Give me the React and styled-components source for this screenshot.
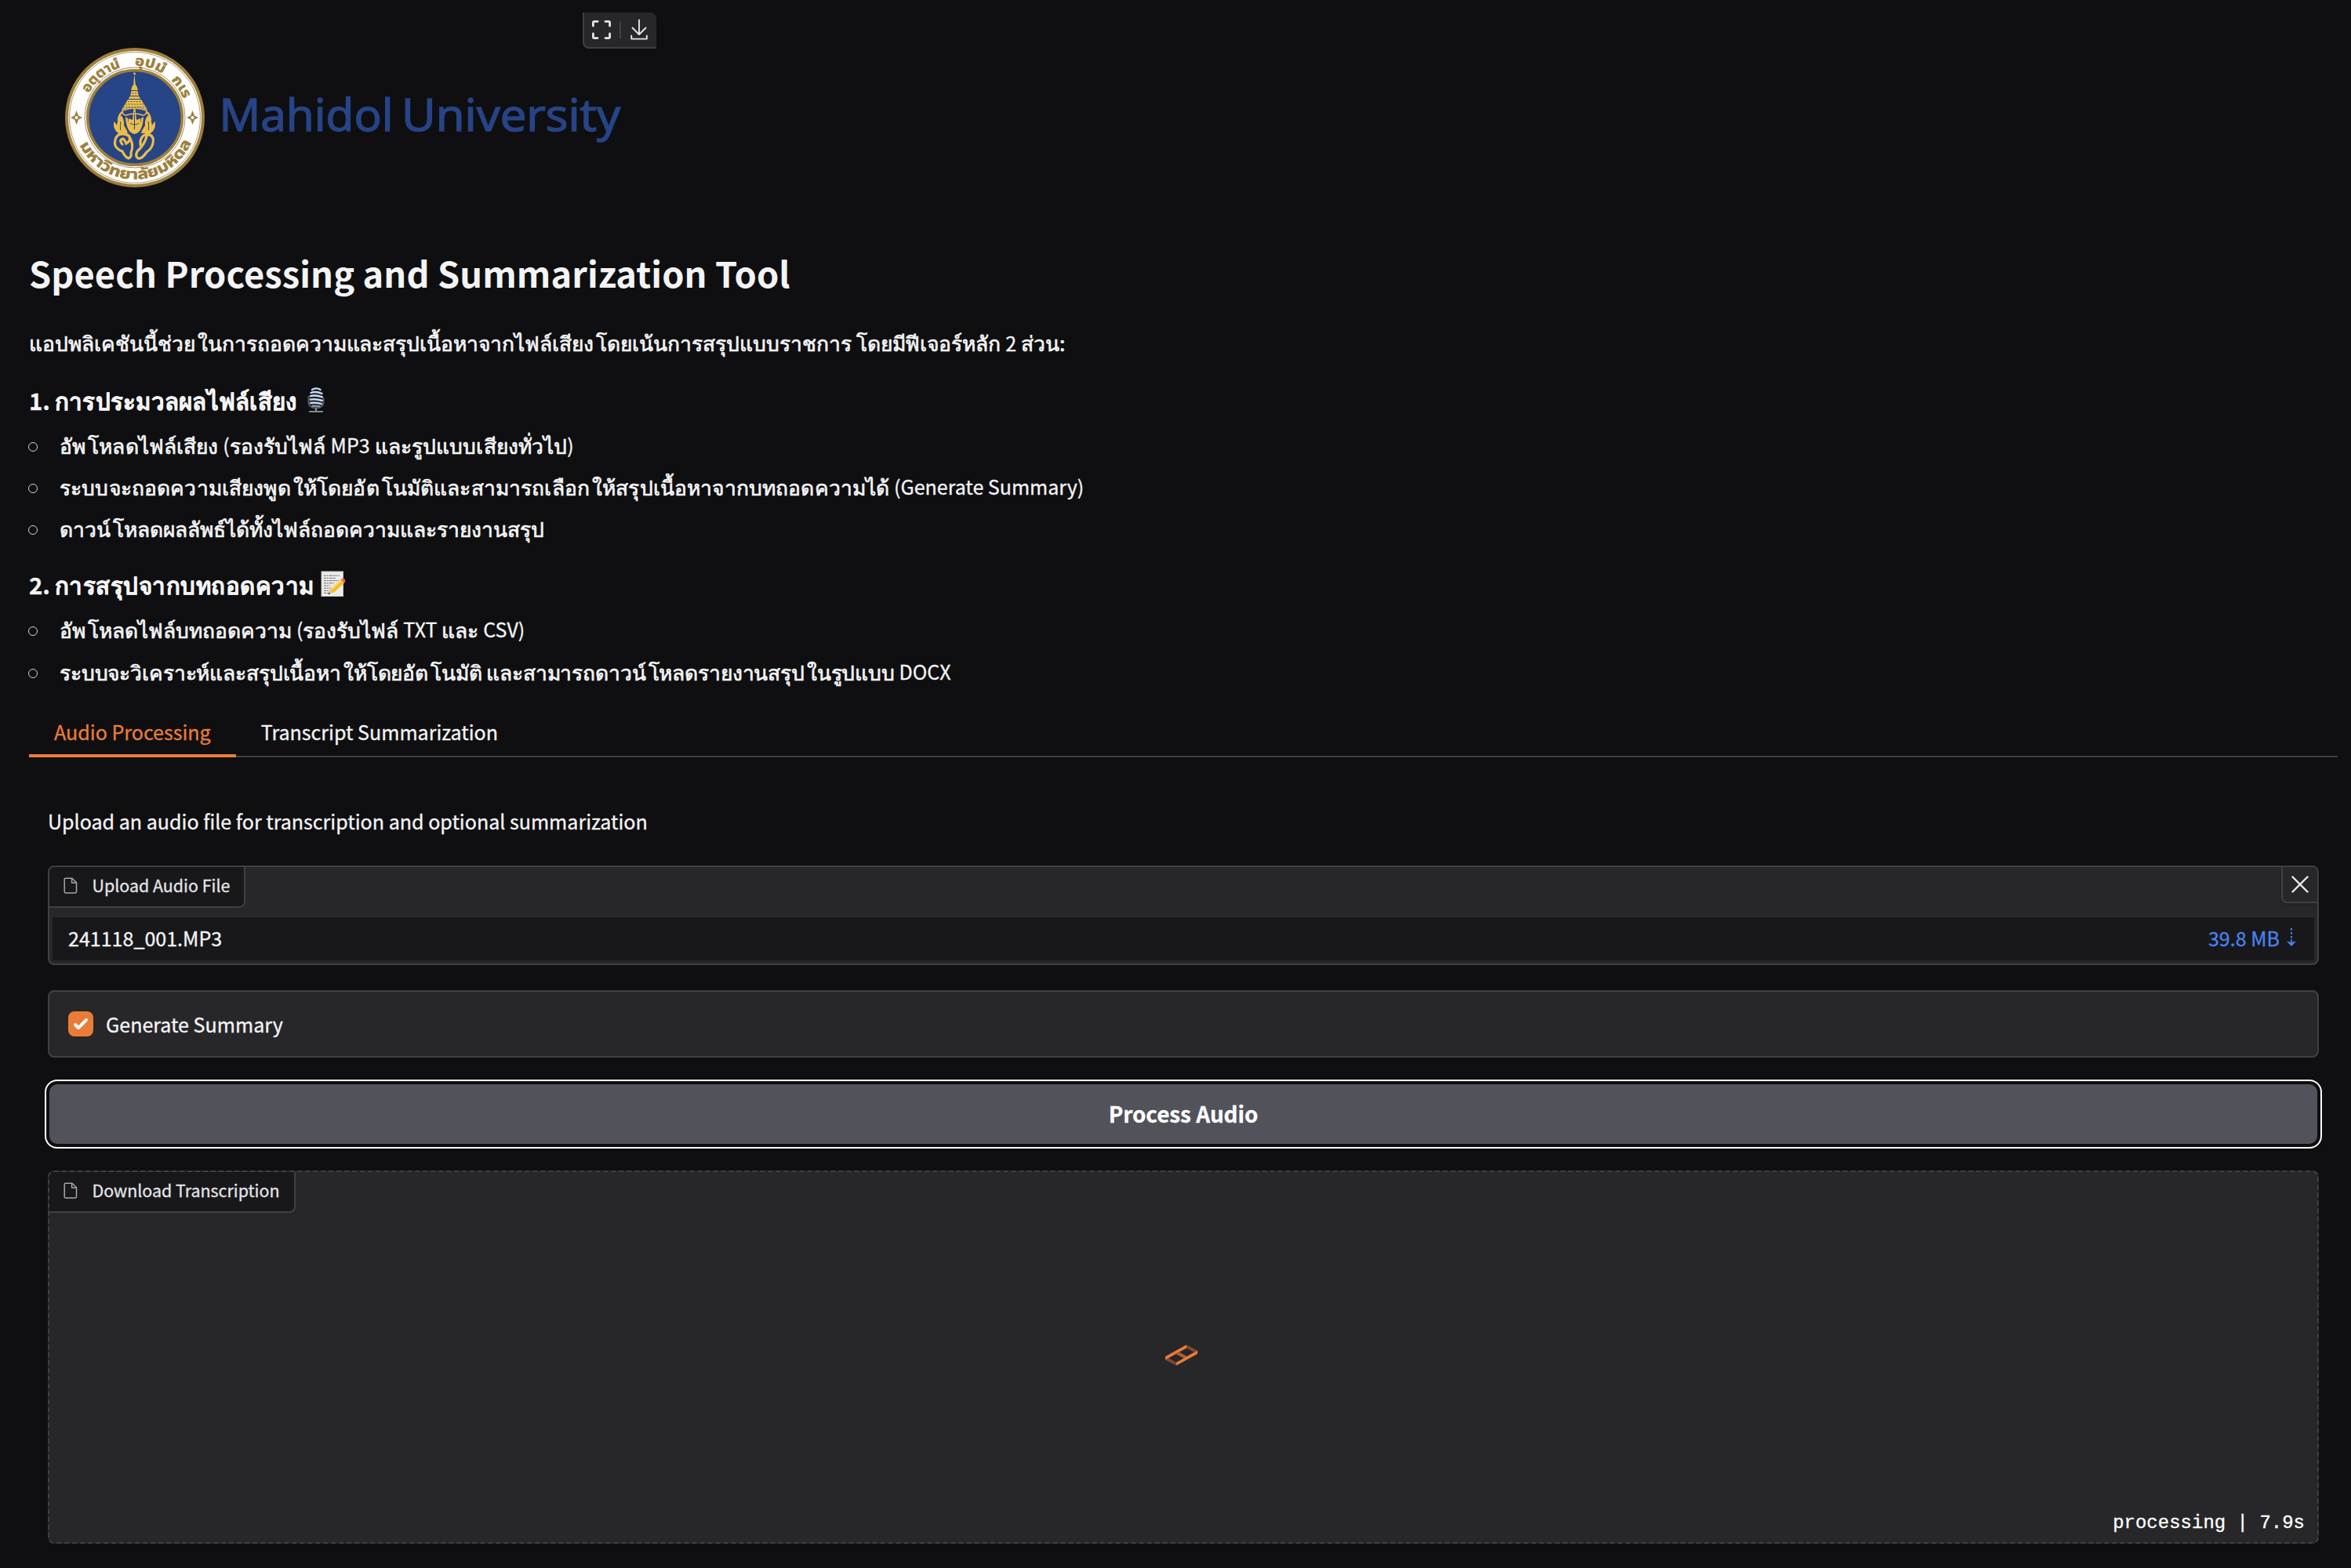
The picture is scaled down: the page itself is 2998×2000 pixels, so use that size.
import React from 'react';
import styled, { createGlobalStyle } from 'styled-components';

const sans = '"Noto Sans CJK JP", sans-serif';
const line = '#3f3f46';
const panel = '#27272a';
const sunken = '#18181b';
const orange = '#e97d37';

const GlobalStyle = createGlobalStyle`
  * { box-sizing: border-box; }
  body {
    margin: 0;
    background: #0f0f11;
    color: #f4f4f5;
    font-family: ${sans};
    -webkit-text-stroke: 0.3px currentColor;
  }
  h1, h3, p, ul { margin: 0; padding: 0; font-weight: 400; }
`;

const Page = styled.main`
  height: 2000px;
  padding: 0 17px 0 37px;
  overflow: hidden;
  display: flex;
  flex-direction: column;
`;

const Banner = styled.header`
  position: relative;
  width: 801px;
  height: 300px;
  padding: 61px 0 0 46px;
  flex: none;
`;

const LogoArt = styled.svg`
  display: block;
  -webkit-text-stroke: 0;
`;

const ImageTools = styled.div`
  position: absolute;
  top: 16px;
  right: 1px;
  width: 94px;
  height: 46px;
  display: flex;
  align-items: center;
  background: ${panel};
  border: solid ${line};
  border-width: 0 0 2px 2px;
  border-radius: 0 8px 0 8px;
  svg { display: block; }
`;

const Text = styled.span`
  letter-spacing: ${(p) => p.$ls || 0}px;
  white-space: pre;
`;

const Latin = styled.span`
  font-size: 25px;
  line-height: 1;
  -webkit-text-stroke: 0.3px currentColor;
  letter-spacing: 0;
  white-space: pre;
`;

const ThaiText = styled.span`
  letter-spacing: ${(p) => p.$ls || 0}px;
  white-space: pre;
  -webkit-text-stroke: 0.7px currentColor;
`;

const VowelGap = styled.span`
  margin-left: 3px;
`;

const Title = styled.h1`
  margin-top: 18px;
  font-size: 45.2px;
  line-height: 60px;
  font-weight: 700;
  white-space: nowrap;
  -webkit-text-stroke: 0;
`;

const Intro = styled.p`
  margin-top: 38.5px;
  font-size: 26.4px;
  line-height: 40px;
  white-space: nowrap;
`;

const Heading = styled.h3`
  display: flex;
  align-items: center;
  margin-top: ${(p) => p.$top}px;
  height: 44px;
  font-size: 29.4px;
  line-height: 44px;
  font-weight: 700;
  white-space: nowrap;
  svg { display: block; margin-left: ${(p) => p.$gap}px; }
`;

const List = styled.ul`
  margin-top: 9px;
  list-style: none;
`;

const Item = styled.li`
  display: flex;
  align-items: center;
  height: 53.4px;
  font-size: 26.4px;
  line-height: 53.4px;
  white-space: nowrap;
  &::before {
    content: '';
    width: 10px;
    height: 10px;
    margin: 5px 28px 0 0;
    border: 1.5px solid #d4d4d8;
    border-radius: 50%;
    margin-left: -1px;
  }
`;

const Tabs = styled.nav`
  display: flex;
  height: 66px;
  margin-top: 17px;
  flex: none;
  box-shadow: inset 0 -2px 0 ${line};
`;

const Tab = styled.div`
  padding: 0 32px;
  font-size: 25.06px;
  line-height: 66px;
  white-space: nowrap;
  color: ${(p) => (p.$active ? orange : '#f4f4f5')};
  box-shadow: ${(p) => (p.$active ? `inset 0 -4px 0 ${orange}` : 'none')};
`;

const Body = styled.section`
  display: flex;
  flex-direction: column;
  padding: 61px 24px 0;
`;

const Hint = styled.p`
  font-size: 25.06px;
  line-height: 40px;
  margin-bottom: 37px;
`;

const Block = styled.div`
  position: relative;
  height: ${(p) => p.$h}px;
  margin-bottom: ${(p) => p.$gap || 0}px;
  background: ${panel};
  border: 2px ${(p) => (p.$dashed ? 'dashed' : 'solid')} ${line};
  border-radius: 8px;
`;

const BlockLabel = styled.div`
  display: inline-flex;
  align-items: center;
  height: 52px;
  padding: 0 18px 3px 18px;
  background: ${sunken};
  border: solid ${line};
  border-width: 0 2px 2px 0;
  border-radius: 6px 0 8px 0;
  font-size: 21.4px;
  line-height: 46px;
  color: #e4e4e7;
  vertical-align: top;
  white-space: nowrap;
  svg { display: block; margin: 1px 18.5px 0 0; }
`;

const BlockTop = styled.div`
  display: flex;
  justify-content: space-between;
  height: 64px;
`;

const ClearButton = styled.div`
  display: flex;
  align-items: center;
  justify-content: center;
  width: 46px;
  height: 46px;
  border: solid ${line};
  border-width: 0 0 2px 2px;
  border-radius: 0 6px 0 8px;
  box-shadow: 0 2px 4px rgba(0, 0, 0, 0.15);
`;

const FileRow = styled.div`
  display: flex;
  align-items: center;
  justify-content: space-between;
  height: 55px;
  margin: 0 4px;
  padding: 0 23px 2px 20px;
  background: ${sunken};
  font-size: 25.06px;
  line-height: 52px;
`;

const FileSize = styled.span`
  display: flex;
  align-items: center;
  gap: 9px;
  color: #4b82ee;
`;

const CheckRow = styled.label`
  display: flex;
  align-items: center;
  height: 82px;
  padding: 0 0 0 24px;
  gap: 16px;
  font-size: 25.06px;
  line-height: 48px;
`;

const CheckBox = styled.span`
  width: 32px;
  height: 32px;
  border-radius: 8px;
  background: ${orange};
  svg { display: block; }
`;

const Process = styled.button`
  margin: 2px 2px 34px;
  height: 76px;
  padding: 0 0 2px;
  border: 0;
  border-radius: 10px;
  background: #52525b;
  box-shadow: 0 0 0 4px #0f0f11, 0 0 0 6px #fff;
  color: #fff;
  font: 700 27.8px/72px ${sans};
`;

const Loading = styled.div`
  display: flex;
  align-items: center;
  justify-content: center;
  height: 380px;
  padding: 0 5px 13px 0;
  margin-top: -2px;
`;

const Progress = styled.div`
  text-align: right;
  padding-right: 16px;
  font: 24px/36px "Liberation Mono", monospace;
  color: #fff;
`;

const Thai = ({ children, $ls }) => (
  <ThaiText $ls={$ls}>
    {children.split(/(?<=[^\s้(])(?=[โใ])/).map((part, i) => (i ? <VowelGap key={i}>{part}</VowelGap> : part))}
  </ThaiText>
);

const FileIcon = () => (
  <svg width="18" height="22" viewBox="0 0 18 22" fill="none" stroke="#a6a6ab" strokeWidth="1.5" strokeLinejoin="round">
    <path d="M11 1.2H2.6Q1.2 1.2 1.2 2.6V18.6Q1.2 20 2.6 20H15.1Q16.5 20 16.5 18.6V6.8Z" />
    <path d="M10.6 1.2V7H16.5" />
  </svg>
);

const Microphone = () => (
  <svg width="22" height="34" viewBox="0 0 22 34">
    <path d="M1.5 12V20Q2 27.5 11 27.5Q20 27.5 20.5 20V14" fill="none" stroke="#55585c" strokeWidth="2.2" />
    <rect x="3.2" y="1" width="16" height="25.5" rx="7.5" fill="#151a22" transform="rotate(4 11 13)" />
    <g stroke="#c9dcf3" strokeWidth="2.4" strokeLinecap="round" fill="none">
      <path d="M6 4Q11 .8 16.5 4M4.5 8Q11 5.5 18.5 9M4 12.2Q11 10.5 18.8 13.4M3.8 16.6Q11 15.5 18.8 18M4.2 21Q11 20.2 17.8 22.2" />
      <path d="M6.5 24.8Q11 25 15.5 25.4" stroke="#8d99a8" />
    </g>
    <path d="M11 27V31M2 32H20" stroke="#85888c" strokeWidth="2.2" />
  </svg>
);

const Memo = () => (
  <svg width="32" height="34" viewBox="0 0 32 34">
    <rect x="1" y="1" width="27.5" height="31.5" fill="#ececea" stroke="#c4c4c0" />
    <path
      d="M4 6.2h20M4 9.4h15M4 12.6h19M4 15.8h13M4 19h8M4 22.2h9M4 25.4h6M4 28.4h5"
      stroke="#66666b"
      strokeWidth="1"
      strokeDasharray="3 .8 2 1 4 .9"
    />
    <path d="M12 23 25.5 11.2 30 15.8 16.5 28Z" fill="#f5bd2c" />
    <path d="M12 23 25.5 11.2 27 12.8 13.5 24.8Z" fill="#fbdd72" />
    <path d="M25.5 11.2 27.5 9.6Q30.5 9.5 31.5 13L30 15.8Z" fill="#e8646c" />
    <path d="M12 23 16.5 28 9.5 30Z" fill="#e3c193" />
    <path d="M10.6 27.2 12 29.3 9.2 30.2Z" fill="#222" />
  </svg>
);

const Spinner = () => (
  <svg width="41" height="27" viewBox="318 1005 123 80">
    <path d="M399 1005 441 1027 428 1034 399 1018Z" fill="#7a4b2f" />
    <path d="M318 1063 331 1056 360 1073V1085Z" fill="#7a4b2f" />
    <path d="M360 1041 373 1034 402 1050 389 1057Z" fill="#a95f33" />
    <path d="M318 1050 399 1005V1018L318 1063Z" fill={orange} />
    <path d="M360 1073 441 1027V1040L360 1085Z" fill={orange} />
  </svg>
);

const Logo = () => (
  <LogoArt width="720" height="180" viewBox="0 0 720 180">
    <circle cx="89" cy="89" r="89" fill="#9c7f3c" />
    <circle cx="89" cy="89" r="85" fill="#fff" />
    <circle cx="89" cy="89" r="83.4" fill="none" stroke="#9c7f3c" strokeWidth=".8" />
    <circle cx="89" cy="89" r="64" fill="none" stroke="#9c7f3c" strokeWidth=".9" />
    <circle cx="89" cy="89" r="60.3" fill="#264486" stroke="#9c7f3c" strokeWidth="3.6" />
    <defs>
      <path id="arcTop" d="M22.6 89A66.4 66.4 0 0 1 155.4 89" />
      <path id="arcLow" d="M10.4 89A78.6 78.6 0 0 0 167.6 89" />
    </defs>
    <g fill="#9c7f3c" stroke="#9c7f3c" strokeWidth=".5" fontFamily='"Noto Sans Thai", "Noto Sans", sans-serif' fontWeight="700" fontSize="17.5">
      <text><textPath href="#arcTop" startOffset="32" textLength="54" lengthAdjust="spacingAndGlyphs">อตฺตานํ</textPath></text>
      <text><textPath href="#arcTop" startOffset="104" textLength="38" lengthAdjust="spacingAndGlyphs">อุปมํ</textPath></text>
      <text><textPath href="#arcTop" startOffset="155" textLength="29" lengthAdjust="spacingAndGlyphs">กเร</textPath></text>
      <text fontSize="18.5"><textPath href="#arcLow" startOffset="36" textLength="178" lengthAdjust="spacingAndGlyphs">มหาวิทยาลัยมหิดล</textPath></text>
    </g>
    <g fill="#9c7f3c">
      <path d="M14.500 80 17 86.500 22 89 17 91.500 14.500 98 12 91.500 7 89 12 86.500Z" />
      <path d="M162.500 80 165 86.500 170 89 165 91.500 162.500 98 160 91.500 155 89 160 86.500Z" />
      <circle cx="14.500" cy="89" r="2" fill="#fff" />
      <circle cx="162.500" cy="89" r="2" fill="#fff" />
    </g>
    <g fill="#ebbd4c">
      <path d="M88.300 33 90 49H87ZM86 48H91L93 54H84ZM84.500 55H92.500L94 61H83ZM82.500 62H94.500L96 65H81Z" />
      <circle cx="88.500" cy="33" r="1.400" />
      <path d="M80 66H97L105 79Q88.500 73 72 79Z" />
      <path d="M66 99Q67 91 71.500 86Q76 92 75 99Q79 105 80 109H68Q60 103 62.500 94Q65 96 66 99Z" />
      <path d="M111 99Q110 91 105.500 86Q101 92 102 99Q98 105 97 109H109Q117 103 114.500 94Q112 96 111 99Z" />
      <path d="M87.400 78H89.600L91 92 96 90Q98 100 88.500 110Q79 100 81 90L86 92Z" />
      <path d="M80 90Q80 100 88.500 103Q97 100 97 90L100 88Q99 108 88.500 110Q78 108 77 88Z" />
    </g>
    <g stroke="#264486" strokeWidth=".9" fill="none" strokeDasharray="1.800 1.800">
      <path d="M82 58H95M80 68.500H97M77 72H100M74 75.500H103" />
    </g>
    <path d="M70.500 105Q70 99 71 94M106.500 105Q107 99 106 94M83 96Q88.500 100 94 96M88.500 82V104" stroke="#264486" strokeWidth="1" fill="none" />
    <g stroke="#ebbd4c" fill="none" strokeLinecap="round">
      <path d="M73 80Q88.500 74 104 80Q104 86 99 86Q88.500 82 78 86Q73 86 73 80Z" strokeWidth="1.500" />
      <path d="M68 92Q69 84 73 82M109 92Q108 84 104 82" strokeWidth="2.400" />
      <path d="M73 123Q68 117 74 116Q77 119 78 122Q84 119 82 113Q76 108 68 111Q62 116 64 125Q67 130 73 132Q77 140 81 141Q85 139 84 134Q89 122 80 111" strokeWidth="3.200" />
      <path d="M96 124Q95 113 103 110.500Q112 110 112.500 118Q112 128 104 133Q98 142 93 141Q89 138 92 132Q101 124 104 113" strokeWidth="3.200" />
    </g>
    <g fill="#264486" stroke="#264486" strokeWidth="1.500" fontFamily='"Open Sans", sans-serif' fontSize="57">
      <text x="196.500" y="105.500" textLength="222" lengthAdjust="spacingAndGlyphs">Mahidol</text>
      <text x="429" y="105.500" textLength="279" lengthAdjust="spacingAndGlyphs">University</text>
    </g>
  </LogoArt>
);

export default function App() {
  return (
    <Page>
      <GlobalStyle />
      <Banner>
        <Logo />
        <ImageTools>
          <svg width="92" height="44" viewBox="0 0 92 44" fill="none" stroke="#e6e6e9" strokeWidth="2.800" strokeLinecap="round" strokeLinejoin="round">
            <path d="M11.400 17V13Q11.400 11.400 13 11.400H17M27 11.400H31Q32.600 11.400 32.600 13V17M32.600 27V31Q32.600 32.600 31 32.600H27M17 32.600H13Q11.400 32.600 11.400 31V27" />
            <path d="M46 11V33" stroke={line} strokeWidth="2" strokeLinecap="butt" />
            <path d="M70 9.500V27.500M61.500 19.500 70 28 78.500 19.500M60.200 29.500V33.600H79.800V29.500" strokeWidth="1.900" />
          </svg>
        </ImageTools>
      </Banner>
      <Title><Text $ls={0.1}>Speech Processing and Summarization Tool</Text></Title>
      <Intro>
        <Thai $ls={-0.02}>แอปพลิเคชันนี้ช่วยในการถอดความและสรุปเนื้อหาจากไฟล์เสียงโดยเน้นการสรุปแบบราชการ โดยมีฟีเจอร์หลัก </Thai>
        <Latin>2</Latin>
        <Thai> ส่วน:</Thai>
      </Intro>
      <Heading $top={31} $gap={14}><Text $ls={-0.2}>1. </Text><Text $ls={0.25}>การประมวลผลไฟล์เสียง</Text><Microphone /></Heading>
      <List>
        <Item>
          <Thai $ls={0.1}>อัพโหลดไฟล์เสียง </Thai>
          <Latin>(</Latin>
          <Thai $ls={0.1}>รองรับไฟล์ </Thai>
          <Latin>MP3</Latin>
          <Thai $ls={0.1}> และรูปแบบเสียงทั่วไป</Thai>
          <Latin>)</Latin>
        </Item>
        <Item>
          <Thai $ls={0.14}>ระบบจะถอดความเสียงพูดให้โดยอัตโนมัติและสามารถเลือกให้สรุปเนื้อหาจากบทถอดความได้</Thai>
          <Latin> (Generate Summary)</Latin>
        </Item>
        <Item><Thai>ดาวน์โหลดผลลัพธ์ได้ทั้งไฟล์ถอดความและรายงานสรุป</Thai></Item>
      </List>
      <Heading $top={22.5} $gap={8}><Text $ls={-0.2}>2. </Text><Text $ls={0.5}>การสรุปจากบทถอดความ</Text><Memo /></Heading>
      <List>
        <Item>
          <Thai>อัพโหลดไฟล์บทถอดความ </Thai>
          <Latin>(</Latin>
          <Thai>รองรับไฟล์ </Thai>
          <Latin>TXT</Latin>
          <Thai> และ </Thai>
          <Latin>CSV)</Latin>
        </Item>
        <Item>
          <Thai $ls={-0.13}>ระบบจะวิเคราะห์และสรุปเนื้อหาให้โดยอัตโนมัติ และสามารถดาวน์โหลดรายงานสรุปในรูปแบบ</Thai>
          <Latin> DOCX</Latin>
        </Item>
      </List>
      <Tabs>
        <Tab $active>Audio Processing</Tab>
        <Tab>Transcript Summarization</Tab>
      </Tabs>
      <Body>
        <Hint>Upload an audio file for transcription and optional summarization</Hint>
        <Block $h={127} $gap={32}>
          <BlockTop>
            <BlockLabel><FileIcon />Upload Audio File</BlockLabel>
            <ClearButton>
              <svg width="22" height="22" viewBox="0 0 22 22" stroke="#ececee" strokeWidth="2.400" strokeLinecap="round">
                <path d="M1.500 1.500 20.500 20.500M20.500 1.500 1.500 20.500" />
              </svg>
            </ClearButton>
          </BlockTop>
          <FileRow>
            <Text>241118_001.MP3</Text>
            <FileSize>
              <Text>39.8 MB</Text>
              <svg width="12" height="24" viewBox="0 0 12 24" fill="#4b82ee">
                <path d="M5 0h2v2.500H5zM5 5h2v2.500H5zM5 10h2v2.500H5zM5 14.500h2v3H5zM0 16.500 6 18 12 16.500 6 23Z" />
              </svg>
            </FileSize>
          </FileRow>
        </Block>
        <Block $h={86} $gap={32}>
          <CheckRow>
            <CheckBox>
              <svg width="32" height="32" viewBox="0 0 16 16" fill="#fff">
                <path d="M12.207 4.793a1 1 0 010 1.414l-5 5a1 1 0 01-1.414 0l-2-2a1 1 0 011.414-1.414L6.5 9.086l4.293-4.293a1 1 0 011.414 0z" />
              </svg>
            </CheckBox>
            <Text>Generate Summary</Text>
          </CheckRow>
        </Block>
        <Process>Process Audio</Process>
        <Block $h={476} $dashed>
          <BlockLabel><FileIcon />Download Transcription</BlockLabel>
          <Loading><Spinner /></Loading>
          <Progress>processing | 7.9s</Progress>
        </Block>
      </Body>
    </Page>
  );
}
